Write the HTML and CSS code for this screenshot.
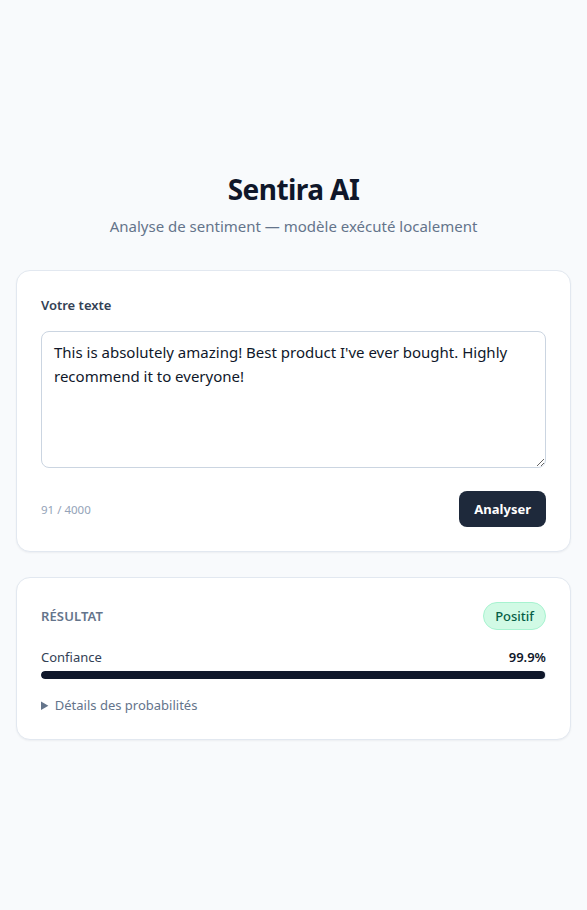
FILE: index.html
```html
<!DOCTYPE html>
<html lang="fr">
<head>
<meta charset="utf-8">
<title>Sentira AI</title>
<link rel="stylesheet" href="styles.css">
</head>
<body>
<main class="page">
  <div class="container">
    <header class="header">
      <h1 class="title">Sentira AI</h1>
      <p class="subtitle">Analyse de sentiment — modèle exécuté localement</p>
    </header>

    <section class="card">
      <label class="label" for="txt">Votre texte</label>
      <textarea id="txt" class="input">This is absolutely amazing! Best product I've ever bought. Highly recommend it to everyone!</textarea>
      <div class="footer">
        <span class="counter">91 / 4000</span>
        <button class="btn" type="button">Analyser</button>
      </div>
    </section>

    <section class="card">
      <div class="result-head">
        <span class="result-title">Résultat</span>
        <span class="badge">Positif</span>
      </div>
      <div class="conf-row">
        <span class="conf-label">Confiance</span>
        <span class="conf-value">99.9%</span>
      </div>
      <div class="bar"><div class="bar-fill" style="width: 99.9%"></div></div>
      <details class="details">
        <summary>Détails des probabilités</summary>
      </details>
    </section>
  </div>
</main>
</body>
</html>
```

FILE: styles.css
```css
* { box-sizing: border-box; }
html, body { margin: 0; padding: 0; }
body {
  background: #f8fafc;
  font-family: "Noto Sans", "Open Sans", sans-serif;
  color: #0f172a;
}
.page {
  min-height: 100vh;
  display: flex;
  align-items: center;
  justify-content: center;
  padding: 0 16px;
}
.container {
  width: 100%;
  max-width: 555px;
  display: flex;
  flex-direction: column;
  gap: 25px;
}
.header {
  text-align: center;
  margin-bottom: 7px;
}
.title {
  margin: 0;
  font-size: 28px;
  line-height: 36px;
  font-weight: 700;
  letter-spacing: -0.02em;
  color: #0f172a;
  padding-top: 1px;
}
.subtitle {
  margin: 7px 0 0;
  font-size: 15px;
  line-height: 24px;
  color: #64748b;
}
.card {
  background: #fff;
  border: 1px solid #e2e8f0;
  border-radius: 14px;
  padding: 24px;
  box-shadow: 0 1px 2px rgba(15, 23, 42, 0.05);
  display: flex;
  flex-direction: column;
}
.label {
  font-size: 13px;
  line-height: 20px;
  font-weight: 600;
  color: #334155;
  margin-bottom: 16px;
}
.input {
  display: block;
  width: 100%;
  height: 137px;
  padding: 8px 12px;
  border: 1px solid #cbd5e1;
  border-radius: 8px;
  font-family: inherit;
  font-size: 15px;
  line-height: 24px;
  color: #0f172a;
  background: #fff;
  resize: vertical;
}
.footer {
  margin-top: 23px;
  display: flex;
  align-items: center;
  justify-content: space-between;
}
.counter {
  font-size: 11.5px;
  color: #94a3b8;
}
.btn {
  height: 36px;
  padding: 0 15px;
  border: none;
  border-radius: 8px;
  background: #1e293b;
  color: #fff;
  font-family: inherit;
  font-size: 13px;
  font-weight: 700;
}
.result-head {
  display: flex;
  align-items: center;
  justify-content: space-between;
}
.result-title {
  font-size: 13px;
  font-weight: 600;
  text-transform: uppercase;
  letter-spacing: 0.01em;
  color: #64748b;
}
.badge {
  height: 28px;
  display: inline-flex;
  align-items: center;
  padding: 0 11px;
  border-radius: 999px;
  background: #d1fae5;
  border: 1px solid #a7f3d0;
  color: #065f46;
  font-size: 13px;
  font-weight: 500;
}
.conf-row {
  margin-top: 17px;
  display: flex;
  justify-content: space-between;
  font-size: 13px;
  line-height: 20px;
}
.conf-label { color: #334155; }
.conf-value { font-weight: 600; color: #0f172a; }
.bar {
  margin-top: 4px;
  height: 8px;
  border-radius: 999px;
  background: #e2e8f0;
  overflow: hidden;
}
.bar-fill {
  height: 100%;
  background: #0f172a;
  border-radius: 999px;
}
.details {
  margin-top: 16px;
  font-size: 13px;
  line-height: 20px;
  color: #64748b;
}
.details summary { cursor: pointer; }
```
